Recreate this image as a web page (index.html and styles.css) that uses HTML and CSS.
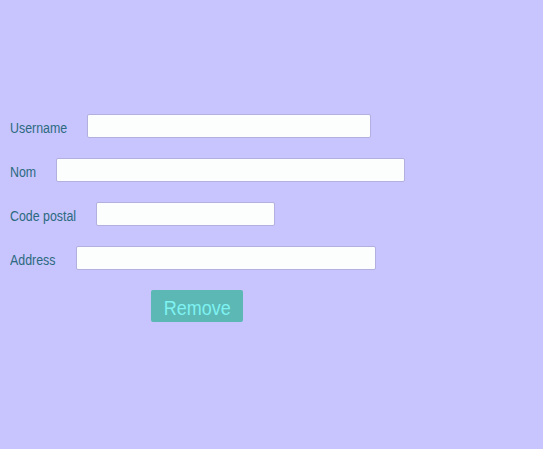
FILE: index.html
```html
<!DOCTYPE html>
<html>
<head>
<meta charset="utf-8">
<link rel="stylesheet" href="styles.css">
</head>
<body>
<form class="form">
  <div class="row"><label class="label label-user">Username</label><input class="field w-user" type="text"></div>
  <div class="row"><label class="label label-nom">Nom</label><input class="field w-nom" type="text"></div>
  <div class="row"><label class="label label-code">Code postal</label><input class="field w-code" type="text"></div>
  <div class="row"><label class="label label-addr">Address</label><input class="field w-addr" type="text"></div>
  <div class="actions"><button type="button" class="btn"><span class="btn-text">Remove</span></button></div>
</form>
</body>
</html>
```

FILE: styles.css
```css
html, body {
  margin: 0;
  padding: 0;
  background: #c8c4fd;
  height: 100%;
}
.form {
  padding: 114px 0 0 10px;
  display: flex;
  flex-direction: column;
  gap: 20px;
}
.row {
  display: flex;
  align-items: center;
  height: 24px;
}
.label {
  display: inline-block;
  font-family: "Liberation Sans", Arial, sans-serif;
  font-size: 14px;
  color: #2b6a80;
  position: relative;
  top: 2px;
  transform: scaleX(0.885);
  transform-origin: left center;
}
.label-user { margin-right: 12.5px; }
.label-nom { margin-right: 16.5px; }
.label-code { margin-right: 11.5px; }
.label-addr { margin-right: 14.5px; }
.field {
  box-sizing: border-box;
  height: 24px;
  margin: 0;
  padding: 2px 4px;
  background: #fcfefe;
  border: 1px solid #b3b0e0;
  border-radius: 2px;
  outline: none;
}
.w-user { width: 284px; }
.w-nom { width: 349px; }
.w-code { width: 179px; }
.w-addr { width: 300px; }
.actions {
  padding-left: 141px;
}
.btn {
  box-sizing: border-box;
  width: 92px;
  height: 32px;
  background: #5cb8b4;
  color: #7ff2f2;
  border: none;
  border-radius: 2px;
  font-family: "Liberation Sans", Arial, sans-serif;
  font-size: 20px;
  padding: 5px 0 0;
  cursor: pointer;
}
.btn-text {
  display: inline-block;
  transform: scaleX(0.9);
}
```
